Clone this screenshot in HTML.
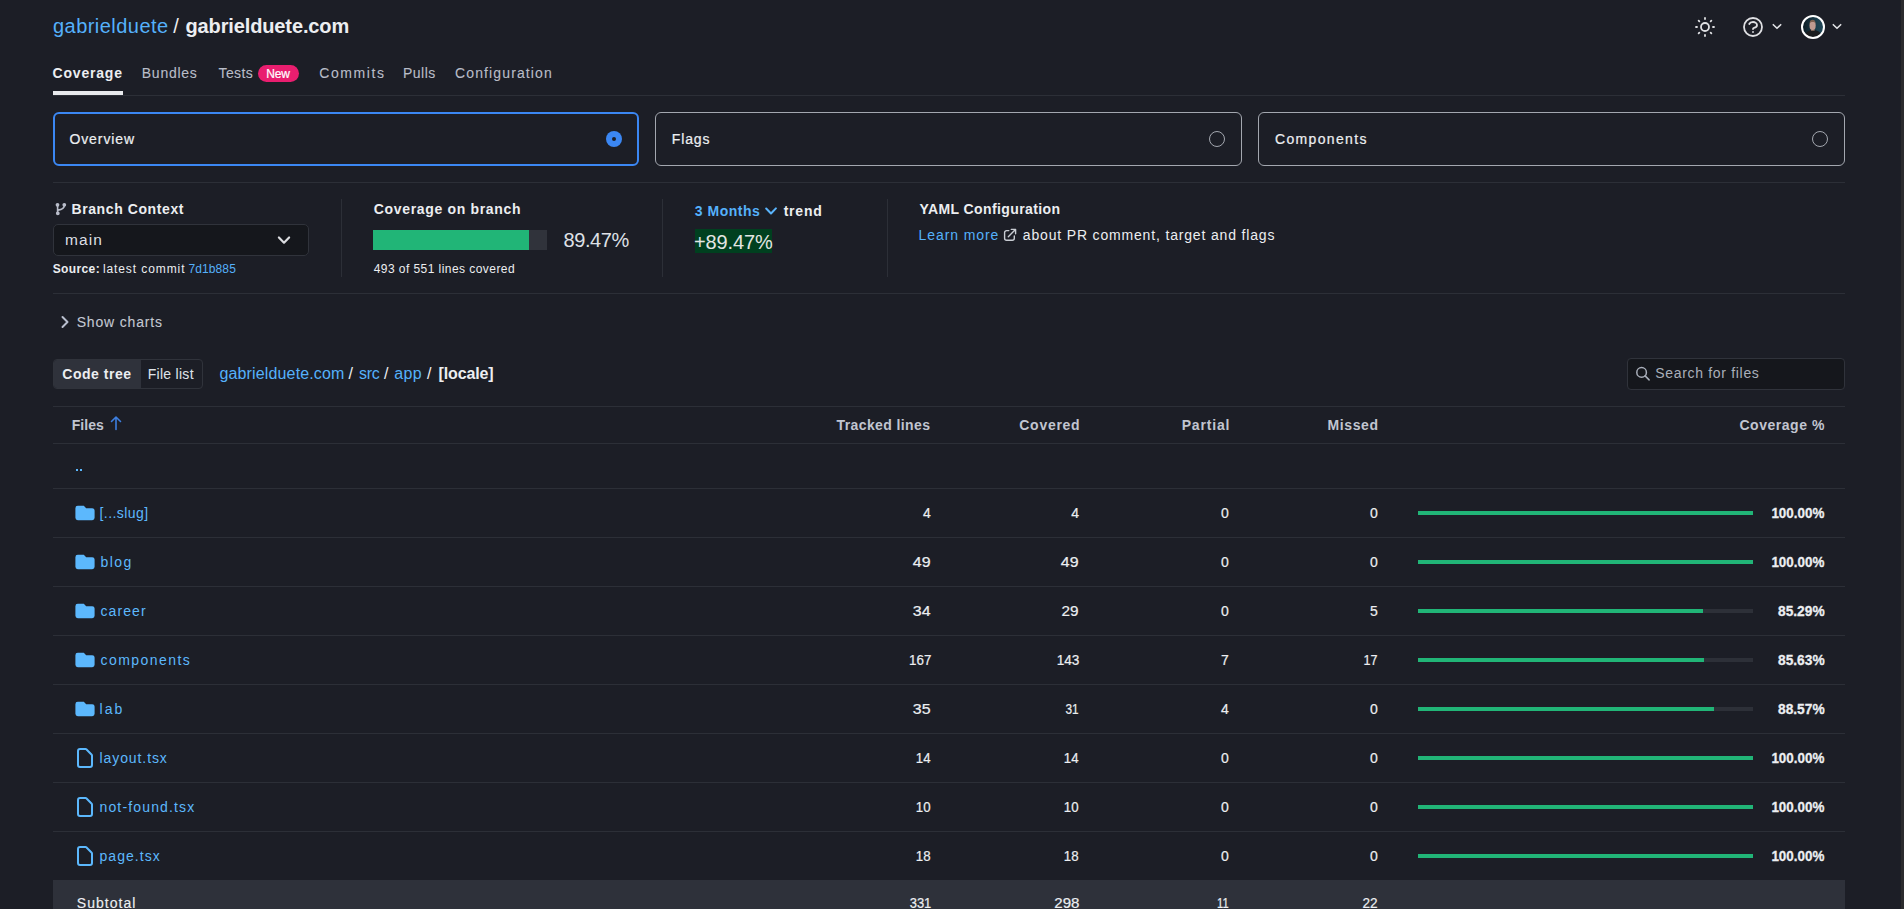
<!DOCTYPE html>
<html><head><meta charset="utf-8"><title>Coverage</title>
<style>
html,body{margin:0;padding:0;background:#1c1e26;width:1904px;height:909px;overflow:hidden;font-family:"Liberation Sans",sans-serif;}
.t{position:absolute;white-space:pre;margin:0;padding:0;}
</style></head><body>
<div style="position:absolute;left:1901px;top:0;width:3px;height:909px;background:#2b2b2d"></div><svg style="position:absolute;left:1693px;top:15px" width="24" height="24" viewBox="0 0 24 24" fill="none" stroke="#dfe0e3" stroke-width="1.8" stroke-linecap="round"><path d="M12 3v1m0 16v1m9-9h-1M4 12H3m15.364 6.364l-.707-.707M6.343 6.343l-.707-.707m12.728 0l-.707.707M6.343 17.657l-.707.707"/><circle cx="12" cy="12" r="4"/></svg><svg style="position:absolute;left:1741px;top:15px" width="24" height="24" viewBox="0 0 24 24" fill="none" stroke="#dfe0e3" stroke-width="1.8" stroke-linecap="round" stroke-linejoin="round"><path d="M8.228 9c.549-1.165 2.03-2 3.772-2 2.21 0 4 1.343 4 3 0 1.4-1.278 2.575-3.006 2.907-.542.104-.994.54-.994 1.093m0 3h.01"/><circle cx="12" cy="12" r="9"/></svg><svg style="position:absolute;left:1771px;top:22px" width="12" height="9" viewBox="0 0 12 9"><path d="M2.3 2.7L6 6.3 9.7 2.7" fill="none" stroke="#e2e3e6" stroke-width="1.6" stroke-linecap="round" stroke-linejoin="round"/></svg><svg style="position:absolute;left:1801px;top:15px" width="24" height="24" viewBox="0 0 24 24"><defs><clipPath id="av"><circle cx="12" cy="12" r="11"/></clipPath><linearGradient id="avg" x1="0" y1="0" x2="1" y2="0"><stop offset="0" stop-color="#0c1a22"/><stop offset="0.6" stop-color="#1b3c4a"/><stop offset="1" stop-color="#22495a"/></linearGradient></defs><circle cx="12" cy="12" r="11" fill="url(#avg)"/><g clip-path="url(#av)"><path d="M3 24L4.5 18.5Q6 16 9.5 15.2L14.5 15.2Q18.5 16 19.8 18.5L21 24z" fill="#1b1c1e"/><rect x="10" y="13" width="3.6" height="3" fill="#7a6055"/><ellipse cx="11.6" cy="10.4" rx="3.1" ry="4.6" fill="#c09a90"/><path d="M8.6 8.4c0-2.6 1.3-3.6 3-3.6s3 1 3 3.6c-.7-.9-1.7-1.3-3-1.3s-2.3.4-3 1.3z" fill="#7d6050"/></g><circle cx="12" cy="12" r="11" fill="none" stroke="#ffffff" stroke-width="2"/></svg><svg style="position:absolute;left:1831px;top:22px" width="12" height="9" viewBox="0 0 12 9"><path d="M2.3 2.7L6 6.3 9.7 2.7" fill="none" stroke="#e2e3e6" stroke-width="1.6" stroke-linecap="round" stroke-linejoin="round"/></svg><div style="position:absolute;left:53px;top:95px;width:1792px;height:1px;background:#2c2f37"></div><div style="position:absolute;left:53px;top:91px;width:70px;height:4px;background:#e8e9ec"></div><div style="position:absolute;left:258px;top:65px;width:41px;height:17px;border-radius:9px;background:#e91e6f"></div><div style="position:absolute;left:53px;top:112px;width:582px;height:50px;border:2px solid #3b87f3;border-radius:6px"></div><div style="position:absolute;left:606px;top:131px;width:16px;height:16px;border-radius:50%;background:#3b87f3"></div><div style="position:absolute;left:612px;top:137px;width:4px;height:4px;border-radius:50%;background:#1c1e26"></div><div style="position:absolute;left:655px;top:112px;width:585px;height:52px;border:1px solid #a3a7af;border-radius:6px"></div><div style="position:absolute;left:1209px;top:131px;width:14px;height:14px;border-radius:50%;border:1px solid #a3a7af"></div><div style="position:absolute;left:1258px;top:112px;width:585px;height:52px;border:1px solid #a3a7af;border-radius:6px"></div><div style="position:absolute;left:1812px;top:131px;width:14px;height:14px;border-radius:50%;border:1px solid #a3a7af"></div><div style="position:absolute;left:53px;top:182px;width:1792px;height:1px;background:#2c2f37"></div><svg style="position:absolute;left:54px;top:202px" width="14" height="14" viewBox="0 0 14 14" fill="none" stroke="#b9bdca" stroke-width="1.6" stroke-linecap="round"><circle cx="3.5" cy="2.8" r="1.1" fill="#b9bdca"/><circle cx="3.8" cy="11.3" r="1.1" fill="#b9bdca"/><circle cx="10.3" cy="2.8" r="1.1" fill="#b9bdca"/><path d="M3.6 3.5v7.2M10.3 3.5c0 3-2.3 4-6.3 4.6"/></svg><div style="position:absolute;left:53px;top:224px;width:254px;height:30px;border:1px solid #30333b;border-radius:5px;background:#15171c"></div><svg style="position:absolute;left:277px;top:235px" width="14" height="10" viewBox="0 0 14 10"><path d="M1.9 2.5L7 7.7 12.1 2.5" fill="none" stroke="#dcdde1" stroke-width="2.2" stroke-linecap="round" stroke-linejoin="round"/></svg><div style="position:absolute;left:341px;top:199px;width:1px;height:78px;background:#2c2f37"></div><div style="position:absolute;left:373px;top:230px;width:174px;height:20px;background:#30333b"></div><div style="position:absolute;left:373px;top:230px;width:156px;height:20px;background:#21b577"></div><div style="position:absolute;left:662px;top:199px;width:1px;height:78px;background:#2c2f37"></div><svg style="position:absolute;left:764px;top:207px" width="14" height="9" viewBox="0 0 14 9"><path d="M2.2 1.5L7 6.5 11.9 1.4" fill="none" stroke="#5ab4fb" stroke-width="2" stroke-linecap="round" stroke-linejoin="round"/></svg><div style="position:absolute;left:695px;top:229px;width:77px;height:24px;background:#00401f"></div><div style="position:absolute;left:887px;top:199px;width:1px;height:78px;background:#2c2f37"></div><svg style="position:absolute;left:1003px;top:228px" width="14" height="14" viewBox="0 0 14 14" fill="none" stroke="#c8ccd3" stroke-width="1.4" stroke-linecap="round" stroke-linejoin="round"><path d="M5.8 2.6H3.6a2 2 0 0 0-2 2v5.6a2 2 0 0 0 2 2h5.7a2 2 0 0 0 2-2V7.9M8.3 1.4h4.3v4.3M12.4 1.6L5.3 8.7"/></svg><div style="position:absolute;left:53px;top:293px;width:1792px;height:1px;background:#2c2f37"></div><svg style="position:absolute;left:58px;top:314px" width="14" height="16" viewBox="0 0 14 16" fill="none" stroke="#b9bfcf" stroke-width="2" stroke-linecap="round" stroke-linejoin="round"><path d="M4.5 3l5 5-5 5"/></svg><div style="position:absolute;left:53px;top:359px;width:148px;height:28px;border:1px solid #30333b;border-radius:4px;background:transparent;overflow:hidden"><div style="position:absolute;left:0;top:0;width:87px;height:28px;background:#2f323b"></div></div><div style="position:absolute;left:1627px;top:358px;width:216px;height:30px;border:1px solid #30333b;border-radius:4px;background:#15171c"></div><svg style="position:absolute;left:1634px;top:366px" width="18" height="18" viewBox="0 0 18 18" fill="none" stroke="#a9afba" stroke-width="1.5" stroke-linecap="round"><circle cx="7.6" cy="6.4" r="4.8"/><path d="M11.1 9.9l4 4"/></svg><div style="position:absolute;left:53px;top:406px;width:1792px;height:1px;background:#2c2f37"></div><div style="position:absolute;left:53px;top:443px;width:1792px;height:1px;background:#2c2f37"></div><div style="position:absolute;left:53px;top:488px;width:1792px;height:1px;background:#2c2f37"></div><div style="position:absolute;left:53px;top:537px;width:1792px;height:1px;background:#2c2f37"></div><div style="position:absolute;left:53px;top:586px;width:1792px;height:1px;background:#2c2f37"></div><div style="position:absolute;left:53px;top:635px;width:1792px;height:1px;background:#2c2f37"></div><div style="position:absolute;left:53px;top:684px;width:1792px;height:1px;background:#2c2f37"></div><div style="position:absolute;left:53px;top:733px;width:1792px;height:1px;background:#2c2f37"></div><div style="position:absolute;left:53px;top:782px;width:1792px;height:1px;background:#2c2f37"></div><div style="position:absolute;left:53px;top:831px;width:1792px;height:1px;background:#2c2f37"></div><svg style="position:absolute;left:109px;top:415px" width="14" height="16" viewBox="0 0 14 16" fill="none" stroke="#3d7fe0" stroke-width="1.6" stroke-linecap="round" stroke-linejoin="round"><path d="M7 14.5V2M2.5 6.5L7 2l4.5 4.5"/></svg><svg style="position:absolute;left:73px;top:501px" width="24" height="24" viewBox="0 0 20 20"><path fill="#5cb8fd" d="M2 6a2 2 0 012-2h5l2 2h5a2 2 0 012 2v6a2 2 0 01-2 2H4a2 2 0 01-2-2V6z"/></svg><div style="position:absolute;left:1418px;top:511px;width:335px;height:4px;background:#2d3038"></div><div style="position:absolute;left:1418px;top:511px;width:335px;height:4px;background:#21b577"></div><svg style="position:absolute;left:73px;top:550px" width="24" height="24" viewBox="0 0 20 20"><path fill="#5cb8fd" d="M2 6a2 2 0 012-2h5l2 2h5a2 2 0 012 2v6a2 2 0 01-2 2H4a2 2 0 01-2-2V6z"/></svg><div style="position:absolute;left:1418px;top:560px;width:335px;height:4px;background:#2d3038"></div><div style="position:absolute;left:1418px;top:560px;width:335px;height:4px;background:#21b577"></div><svg style="position:absolute;left:73px;top:599px" width="24" height="24" viewBox="0 0 20 20"><path fill="#5cb8fd" d="M2 6a2 2 0 012-2h5l2 2h5a2 2 0 012 2v6a2 2 0 01-2 2H4a2 2 0 01-2-2V6z"/></svg><div style="position:absolute;left:1418px;top:609px;width:335px;height:4px;background:#2d3038"></div><div style="position:absolute;left:1418px;top:609px;width:285px;height:4px;background:#21b577"></div><svg style="position:absolute;left:73px;top:648px" width="24" height="24" viewBox="0 0 20 20"><path fill="#5cb8fd" d="M2 6a2 2 0 012-2h5l2 2h5a2 2 0 012 2v6a2 2 0 01-2 2H4a2 2 0 01-2-2V6z"/></svg><div style="position:absolute;left:1418px;top:658px;width:335px;height:4px;background:#2d3038"></div><div style="position:absolute;left:1418px;top:658px;width:286px;height:4px;background:#21b577"></div><svg style="position:absolute;left:73px;top:697px" width="24" height="24" viewBox="0 0 20 20"><path fill="#5cb8fd" d="M2 6a2 2 0 012-2h5l2 2h5a2 2 0 012 2v6a2 2 0 01-2 2H4a2 2 0 01-2-2V6z"/></svg><div style="position:absolute;left:1418px;top:707px;width:335px;height:4px;background:#2d3038"></div><div style="position:absolute;left:1418px;top:707px;width:296px;height:4px;background:#21b577"></div><svg style="position:absolute;left:73px;top:746px" width="24" height="24" viewBox="0 0 24 24" fill="none" stroke="#5cb8fd" stroke-width="2" stroke-linecap="round" stroke-linejoin="round"><path d="M7 21h10a2 2 0 002-2V9.414a1 1 0 00-.293-.707l-5.414-5.414A1 1 0 0012.586 3H7a2 2 0 00-2 2v14a2 2 0 002 2z"/></svg><div style="position:absolute;left:1418px;top:756px;width:335px;height:4px;background:#2d3038"></div><div style="position:absolute;left:1418px;top:756px;width:335px;height:4px;background:#21b577"></div><svg style="position:absolute;left:73px;top:795px" width="24" height="24" viewBox="0 0 24 24" fill="none" stroke="#5cb8fd" stroke-width="2" stroke-linecap="round" stroke-linejoin="round"><path d="M7 21h10a2 2 0 002-2V9.414a1 1 0 00-.293-.707l-5.414-5.414A1 1 0 0012.586 3H7a2 2 0 00-2 2v14a2 2 0 002 2z"/></svg><div style="position:absolute;left:1418px;top:805px;width:335px;height:4px;background:#2d3038"></div><div style="position:absolute;left:1418px;top:805px;width:335px;height:4px;background:#21b577"></div><svg style="position:absolute;left:73px;top:844px" width="24" height="24" viewBox="0 0 24 24" fill="none" stroke="#5cb8fd" stroke-width="2" stroke-linecap="round" stroke-linejoin="round"><path d="M7 21h10a2 2 0 002-2V9.414a1 1 0 00-.293-.707l-5.414-5.414A1 1 0 0012.586 3H7a2 2 0 00-2 2v14a2 2 0 002 2z"/></svg><div style="position:absolute;left:1418px;top:854px;width:335px;height:4px;background:#2d3038"></div><div style="position:absolute;left:1418px;top:854px;width:335px;height:4px;background:#21b577"></div><div style="position:absolute;left:76px;top:469px;width:2px;height:2px;background:#5cb8fd"></div><div style="position:absolute;left:80px;top:469px;width:2px;height:2px;background:#5cb8fd"></div><div style="position:absolute;left:53px;top:880px;width:1792px;height:29px;background:#2e313a"></div>
<div class="t" style="left:53.00px;top:16.00px;font-size:20px;line-height:20px;font-weight:400;color:#55b1fb;letter-spacing:0.455px;">gabrielduete</div>
<div class="t" style="left:173.20px;top:16.00px;font-size:20px;line-height:20px;font-weight:400;color:#eceef1;">/</div>
<div class="t" style="left:185.50px;top:15.80px;font-size:20px;line-height:20px;font-weight:700;color:#eceef1;letter-spacing:-0.127px;">gabrielduete.com</div>
<div class="t" style="left:52.60px;top:66.00px;font-size:14px;line-height:14px;font-weight:700;color:#eceef1;letter-spacing:0.800px;">Coverage</div>
<div class="t" style="left:141.80px;top:66.00px;font-size:14px;line-height:14px;font-weight:400;color:#b9bdc8;letter-spacing:0.733px;-webkit-text-stroke:0.1px #b9bdc8;">Bundles</div>
<div class="t" style="left:218.50px;top:66.00px;font-size:14px;line-height:14px;font-weight:400;color:#b9bdc8;letter-spacing:0.375px;-webkit-text-stroke:0.1px #b9bdc8;">Tests</div>
<div class="t" style="left:266.30px;top:67.80px;font-size:12px;line-height:12px;font-weight:400;color:#ffffff;letter-spacing:-0.200px;-webkit-text-stroke:0.22px #ffffff;">New</div>
<div class="t" style="left:319.30px;top:66.00px;font-size:14px;line-height:14px;font-weight:400;color:#b9bdc8;letter-spacing:1.583px;-webkit-text-stroke:0.1px #b9bdc8;">Commits</div>
<div class="t" style="left:403.00px;top:66.00px;font-size:14px;line-height:14px;font-weight:400;color:#b9bdc8;letter-spacing:0.500px;-webkit-text-stroke:0.1px #b9bdc8;">Pulls</div>
<div class="t" style="left:455.00px;top:66.00px;font-size:14px;line-height:14px;font-weight:400;color:#b9bdc8;letter-spacing:1.125px;-webkit-text-stroke:0.1px #b9bdc8;">Configuration</div>
<div class="t" style="left:69.40px;top:132.00px;font-size:14px;line-height:14px;font-weight:400;color:#eceef1;letter-spacing:0.914px;-webkit-text-stroke:0.22px #eceef1;">Overview</div>
<div class="t" style="left:671.80px;top:132.00px;font-size:14px;line-height:14px;font-weight:400;color:#eceef1;letter-spacing:0.850px;-webkit-text-stroke:0.22px #eceef1;">Flags</div>
<div class="t" style="left:1275.00px;top:132.00px;font-size:14px;line-height:14px;font-weight:400;color:#eceef1;letter-spacing:1.333px;-webkit-text-stroke:0.22px #eceef1;">Components</div>
<div class="t" style="left:71.50px;top:202.20px;font-size:14px;line-height:14px;font-weight:700;color:#eceef1;letter-spacing:0.592px;">Branch Context</div>
<div class="t" style="left:64.90px;top:232.00px;font-size:15.5px;line-height:15.5px;font-weight:400;color:#dcdfe4;letter-spacing:1.133px;">main</div>
<div class="t" style="left:52.70px;top:262.60px;font-size:12px;line-height:12px;font-weight:700;color:#eceef1;letter-spacing:0.383px;">Source:</div>
<div class="t" style="left:102.90px;top:262.60px;font-size:12px;line-height:12px;font-weight:400;color:#eceef1;letter-spacing:0.908px;">latest commit</div>
<div class="t" style="left:188.40px;top:262.60px;font-size:12px;line-height:12px;font-weight:400;color:#55b1fb;letter-spacing:0.117px;">7d1b885</div>
<div class="t" style="left:373.70px;top:202.20px;font-size:14px;line-height:14px;font-weight:700;color:#eceef1;letter-spacing:0.676px;">Coverage on branch</div>
<div class="t" style="left:563.50px;top:230.00px;font-size:20px;line-height:20px;font-weight:400;color:#dfe1e6;letter-spacing:-0.420px;">89.47%</div>
<div class="t" style="left:373.70px;top:263.00px;font-size:12px;line-height:12px;font-weight:400;color:#eceef1;letter-spacing:0.443px;">493 of 551 lines covered</div>
<div class="t" style="left:694.80px;top:203.70px;font-size:14px;line-height:14px;font-weight:700;color:#55b1fb;letter-spacing:0.514px;">3 Months</div>
<div class="t" style="left:783.70px;top:203.70px;font-size:14px;line-height:14px;font-weight:700;color:#eceef1;letter-spacing:0.775px;">trend</div>
<div class="t" style="left:694.00px;top:231.90px;font-size:20px;line-height:20px;font-weight:400;color:#e3e6e3;letter-spacing:-0.133px;">+89.47%</div>
<div class="t" style="left:919.60px;top:202.40px;font-size:14px;line-height:14px;font-weight:700;color:#eceef1;letter-spacing:0.394px;">YAML Configuration</div>
<div class="t" style="left:918.60px;top:228.00px;font-size:14px;line-height:14px;font-weight:400;color:#55b1fb;letter-spacing:0.911px;">Learn more</div>
<div class="t" style="left:1022.80px;top:228.00px;font-size:14px;line-height:14px;font-weight:400;color:#eceef1;letter-spacing:0.833px;">about PR comment, target and flags</div>
<div class="t" style="left:76.70px;top:314.60px;font-size:14px;line-height:14px;font-weight:400;color:#c3c8d2;letter-spacing:0.830px;-webkit-text-stroke:0.1px #c3c8d2;">Show charts</div>
<div class="t" style="left:62.30px;top:366.80px;font-size:14px;line-height:14px;font-weight:700;color:#eceef1;letter-spacing:0.525px;">Code tree</div>
<div class="t" style="left:147.70px;top:366.80px;font-size:14px;line-height:14px;font-weight:400;color:#dfe2e8;letter-spacing:0.287px;-webkit-text-stroke:0.05px #dfe2e8;">File list</div>
<div class="t" style="left:219.50px;top:366.00px;font-size:16px;line-height:16px;font-weight:400;color:#55b1fb;letter-spacing:0.140px;">gabrielduete.com</div>
<div class="t" style="left:348.60px;top:366.00px;font-size:16px;line-height:16px;font-weight:400;color:#eceef1;">/</div>
<div class="t" style="left:358.90px;top:366.00px;font-size:16px;line-height:16px;font-weight:400;color:#55b1fb;letter-spacing:-0.250px;">src</div>
<div class="t" style="left:384.00px;top:366.00px;font-size:16px;line-height:16px;font-weight:400;color:#eceef1;">/</div>
<div class="t" style="left:394.30px;top:366.00px;font-size:16px;line-height:16px;font-weight:400;color:#55b1fb;letter-spacing:0.300px;">app</div>
<div class="t" style="left:427.00px;top:366.00px;font-size:16px;line-height:16px;font-weight:400;color:#eceef1;">/</div>
<div class="t" style="left:438.50px;top:366.00px;font-size:16px;line-height:16px;font-weight:700;color:#eceef1;letter-spacing:-0.129px;">[locale]</div>
<div class="t" style="left:1655.30px;top:365.70px;font-size:14px;line-height:14px;font-weight:400;color:#a9afba;letter-spacing:0.680px;">Search for files</div>
<div class="t" style="left:71.80px;top:418.00px;font-size:14px;line-height:14px;font-weight:700;color:#c1c5d0;letter-spacing:0.025px;">Files</div>
<div class="t" style="left:836.50px;top:418.00px;font-size:14px;line-height:14px;font-weight:700;color:#c1c5d0;letter-spacing:0.400px;">Tracked lines</div>
<div class="t" style="left:1019.30px;top:418.00px;font-size:14px;line-height:14px;font-weight:700;color:#c1c5d0;letter-spacing:0.717px;">Covered</div>
<div class="t" style="left:1181.70px;top:418.00px;font-size:14px;line-height:14px;font-weight:700;color:#c1c5d0;letter-spacing:0.833px;">Partial</div>
<div class="t" style="left:1327.60px;top:418.00px;font-size:14px;line-height:14px;font-weight:700;color:#c1c5d0;letter-spacing:0.580px;">Missed</div>
<div class="t" style="left:1739.40px;top:418.00px;font-size:14px;line-height:14px;font-weight:700;color:#c1c5d0;letter-spacing:0.544px;">Coverage %</div>
<div class="t" style="left:99.50px;top:505.80px;font-size:14px;line-height:14px;font-weight:400;color:#5cb8fd;letter-spacing:0.450px;">[...slug]</div>
<div class="t" style="left:922.90px;top:506.00px;font-size:14px;line-height:14px;font-weight:400;color:#eceef1;-webkit-text-stroke:0.2px #eceef1;">4</div>
<div class="t" style="left:1071.30px;top:506.00px;font-size:14px;line-height:14px;font-weight:400;color:#eceef1;-webkit-text-stroke:0.2px #eceef1;">4</div>
<div class="t" style="left:1220.90px;top:506.00px;font-size:14px;line-height:14px;font-weight:400;color:#eceef1;-webkit-text-stroke:0.2px #eceef1;">0</div>
<div class="t" style="left:1370.00px;top:506.00px;font-size:14px;line-height:14px;font-weight:400;color:#eceef1;-webkit-text-stroke:0.2px #eceef1;">0</div>
<div class="t" style="left:1762.80px;top:504.50px;font-size:15.5px;line-height:15.5px;font-weight:700;color:#eceef1;-webkit-text-stroke:0.3px #eceef1;transform:scaleX(0.8645);transform-origin:62px 0;">100.00%</div>
<div class="t" style="left:100.50px;top:554.80px;font-size:14px;line-height:14px;font-weight:400;color:#5cb8fd;letter-spacing:1.400px;">blog</div>
<div class="t" style="left:914.90px;top:555.00px;font-size:14px;line-height:14px;font-weight:400;color:#eceef1;-webkit-text-stroke:0.2px #eceef1;transform:scaleX(1.1375);transform-origin:16px 0;">49</div>
<div class="t" style="left:1063.30px;top:555.00px;font-size:14px;line-height:14px;font-weight:400;color:#eceef1;-webkit-text-stroke:0.2px #eceef1;transform:scaleX(1.1375);transform-origin:16px 0;">49</div>
<div class="t" style="left:1220.90px;top:555.00px;font-size:14px;line-height:14px;font-weight:400;color:#eceef1;-webkit-text-stroke:0.2px #eceef1;">0</div>
<div class="t" style="left:1370.00px;top:555.00px;font-size:14px;line-height:14px;font-weight:400;color:#eceef1;-webkit-text-stroke:0.2px #eceef1;">0</div>
<div class="t" style="left:1762.80px;top:553.50px;font-size:15.5px;line-height:15.5px;font-weight:700;color:#eceef1;-webkit-text-stroke:0.3px #eceef1;transform:scaleX(0.8645);transform-origin:62px 0;">100.00%</div>
<div class="t" style="left:100.50px;top:603.80px;font-size:14px;line-height:14px;font-weight:400;color:#5cb8fd;letter-spacing:1.080px;">career</div>
<div class="t" style="left:914.90px;top:604.00px;font-size:14px;line-height:14px;font-weight:400;color:#eceef1;-webkit-text-stroke:0.2px #eceef1;transform:scaleX(1.1375);transform-origin:16px 0;">34</div>
<div class="t" style="left:1063.30px;top:604.00px;font-size:14px;line-height:14px;font-weight:400;color:#eceef1;-webkit-text-stroke:0.2px #eceef1;transform:scaleX(1.0938);transform-origin:16px 0;">29</div>
<div class="t" style="left:1220.90px;top:604.00px;font-size:14px;line-height:14px;font-weight:400;color:#eceef1;-webkit-text-stroke:0.2px #eceef1;">0</div>
<div class="t" style="left:1370.00px;top:604.00px;font-size:14px;line-height:14px;font-weight:400;color:#eceef1;-webkit-text-stroke:0.2px #eceef1;">5</div>
<div class="t" style="left:1771.80px;top:602.50px;font-size:15.5px;line-height:15.5px;font-weight:700;color:#eceef1;-webkit-text-stroke:0.3px #eceef1;transform:scaleX(0.8868);transform-origin:53px 0;">85.29%</div>
<div class="t" style="left:100.50px;top:652.80px;font-size:14px;line-height:14px;font-weight:400;color:#5cb8fd;letter-spacing:1.444px;">components</div>
<div class="t" style="left:907.90px;top:653.00px;font-size:14px;line-height:14px;font-weight:400;color:#eceef1;-webkit-text-stroke:0.2px #eceef1;transform:scaleX(0.9545);transform-origin:23px 0;">167</div>
<div class="t" style="left:1056.30px;top:653.00px;font-size:14px;line-height:14px;font-weight:400;color:#eceef1;-webkit-text-stroke:0.2px #eceef1;transform:scaleX(0.9727);transform-origin:23px 0;">143</div>
<div class="t" style="left:1220.90px;top:653.00px;font-size:14px;line-height:14px;font-weight:400;color:#eceef1;-webkit-text-stroke:0.2px #eceef1;">7</div>
<div class="t" style="left:1362.00px;top:653.00px;font-size:14px;line-height:14px;font-weight:400;color:#eceef1;-webkit-text-stroke:0.2px #eceef1;transform:scaleX(0.9000);transform-origin:16px 0;">17</div>
<div class="t" style="left:1771.80px;top:651.50px;font-size:15.5px;line-height:15.5px;font-weight:700;color:#eceef1;-webkit-text-stroke:0.3px #eceef1;transform:scaleX(0.8868);transform-origin:53px 0;">85.63%</div>
<div class="t" style="left:99.50px;top:701.80px;font-size:14px;line-height:14px;font-weight:400;color:#5cb8fd;letter-spacing:2.050px;">lab</div>
<div class="t" style="left:914.90px;top:702.00px;font-size:14px;line-height:14px;font-weight:400;color:#eceef1;-webkit-text-stroke:0.2px #eceef1;transform:scaleX(1.1375);transform-origin:16px 0;">35</div>
<div class="t" style="left:1063.30px;top:702.00px;font-size:14px;line-height:14px;font-weight:400;color:#eceef1;-webkit-text-stroke:0.2px #eceef1;transform:scaleX(0.8438);transform-origin:16px 0;">31</div>
<div class="t" style="left:1220.90px;top:702.00px;font-size:14px;line-height:14px;font-weight:400;color:#eceef1;-webkit-text-stroke:0.2px #eceef1;">4</div>
<div class="t" style="left:1370.00px;top:702.00px;font-size:14px;line-height:14px;font-weight:400;color:#eceef1;-webkit-text-stroke:0.2px #eceef1;">0</div>
<div class="t" style="left:1771.80px;top:700.50px;font-size:15.5px;line-height:15.5px;font-weight:700;color:#eceef1;-webkit-text-stroke:0.3px #eceef1;transform:scaleX(0.8868);transform-origin:53px 0;">88.57%</div>
<div class="t" style="left:99.50px;top:750.80px;font-size:14px;line-height:14px;font-weight:400;color:#5cb8fd;letter-spacing:0.911px;">layout.tsx</div>
<div class="t" style="left:914.90px;top:751.00px;font-size:14px;line-height:14px;font-weight:400;color:#eceef1;-webkit-text-stroke:0.2px #eceef1;transform:scaleX(0.9467);transform-origin:16px 0;">14</div>
<div class="t" style="left:1063.30px;top:751.00px;font-size:14px;line-height:14px;font-weight:400;color:#eceef1;-webkit-text-stroke:0.2px #eceef1;transform:scaleX(0.9467);transform-origin:16px 0;">14</div>
<div class="t" style="left:1220.90px;top:751.00px;font-size:14px;line-height:14px;font-weight:400;color:#eceef1;-webkit-text-stroke:0.2px #eceef1;">0</div>
<div class="t" style="left:1370.00px;top:751.00px;font-size:14px;line-height:14px;font-weight:400;color:#eceef1;-webkit-text-stroke:0.2px #eceef1;">0</div>
<div class="t" style="left:1762.80px;top:749.50px;font-size:15.5px;line-height:15.5px;font-weight:700;color:#eceef1;-webkit-text-stroke:0.3px #eceef1;transform:scaleX(0.8645);transform-origin:62px 0;">100.00%</div>
<div class="t" style="left:99.50px;top:799.80px;font-size:14px;line-height:14px;font-weight:400;color:#5cb8fd;letter-spacing:1.150px;">not-found.tsx</div>
<div class="t" style="left:914.90px;top:800.00px;font-size:14px;line-height:14px;font-weight:400;color:#eceef1;-webkit-text-stroke:0.2px #eceef1;transform:scaleX(0.9467);transform-origin:16px 0;">10</div>
<div class="t" style="left:1063.30px;top:800.00px;font-size:14px;line-height:14px;font-weight:400;color:#eceef1;-webkit-text-stroke:0.2px #eceef1;transform:scaleX(0.9467);transform-origin:16px 0;">10</div>
<div class="t" style="left:1220.90px;top:800.00px;font-size:14px;line-height:14px;font-weight:400;color:#eceef1;-webkit-text-stroke:0.2px #eceef1;">0</div>
<div class="t" style="left:1370.00px;top:800.00px;font-size:14px;line-height:14px;font-weight:400;color:#eceef1;-webkit-text-stroke:0.2px #eceef1;">0</div>
<div class="t" style="left:1762.80px;top:798.50px;font-size:15.5px;line-height:15.5px;font-weight:700;color:#eceef1;-webkit-text-stroke:0.3px #eceef1;transform:scaleX(0.8645);transform-origin:62px 0;">100.00%</div>
<div class="t" style="left:99.50px;top:848.80px;font-size:14px;line-height:14px;font-weight:400;color:#5cb8fd;letter-spacing:1.043px;">page.tsx</div>
<div class="t" style="left:914.90px;top:849.00px;font-size:14px;line-height:14px;font-weight:400;color:#eceef1;-webkit-text-stroke:0.2px #eceef1;transform:scaleX(0.9467);transform-origin:16px 0;">18</div>
<div class="t" style="left:1063.30px;top:849.00px;font-size:14px;line-height:14px;font-weight:400;color:#eceef1;-webkit-text-stroke:0.2px #eceef1;transform:scaleX(0.9467);transform-origin:16px 0;">18</div>
<div class="t" style="left:1220.90px;top:849.00px;font-size:14px;line-height:14px;font-weight:400;color:#eceef1;-webkit-text-stroke:0.2px #eceef1;">0</div>
<div class="t" style="left:1370.00px;top:849.00px;font-size:14px;line-height:14px;font-weight:400;color:#eceef1;-webkit-text-stroke:0.2px #eceef1;">0</div>
<div class="t" style="left:1762.80px;top:847.50px;font-size:15.5px;line-height:15.5px;font-weight:700;color:#eceef1;-webkit-text-stroke:0.3px #eceef1;transform:scaleX(0.8645);transform-origin:62px 0;">100.00%</div>
<div class="t" style="left:76.80px;top:895.80px;font-size:14px;line-height:14px;font-weight:400;color:#eceef1;letter-spacing:1.043px;-webkit-text-stroke:0.15px #eceef1;">Subtotal</div>
<div class="t" style="left:907.90px;top:895.80px;font-size:14px;line-height:14px;font-weight:400;color:#eceef1;-webkit-text-stroke:0.2px #eceef1;transform:scaleX(0.9261);transform-origin:23px 0;">331</div>
<div class="t" style="left:1056.00px;top:895.80px;font-size:14px;line-height:14px;font-weight:400;color:#eceef1;-webkit-text-stroke:0.2px #eceef1;transform:scaleX(1.0739);transform-origin:23px 0;">298</div>
<div class="t" style="left:1213.70px;top:895.80px;font-size:14px;line-height:14px;font-weight:400;color:#eceef1;-webkit-text-stroke:0.2px #eceef1;transform:scaleX(0.8000);transform-origin:15px 0;">11</div>
<div class="t" style="left:1361.60px;top:895.80px;font-size:14px;line-height:14px;font-weight:400;color:#eceef1;-webkit-text-stroke:0.2px #eceef1;transform:scaleX(0.9750);transform-origin:16px 0;">22</div>
</body></html>
